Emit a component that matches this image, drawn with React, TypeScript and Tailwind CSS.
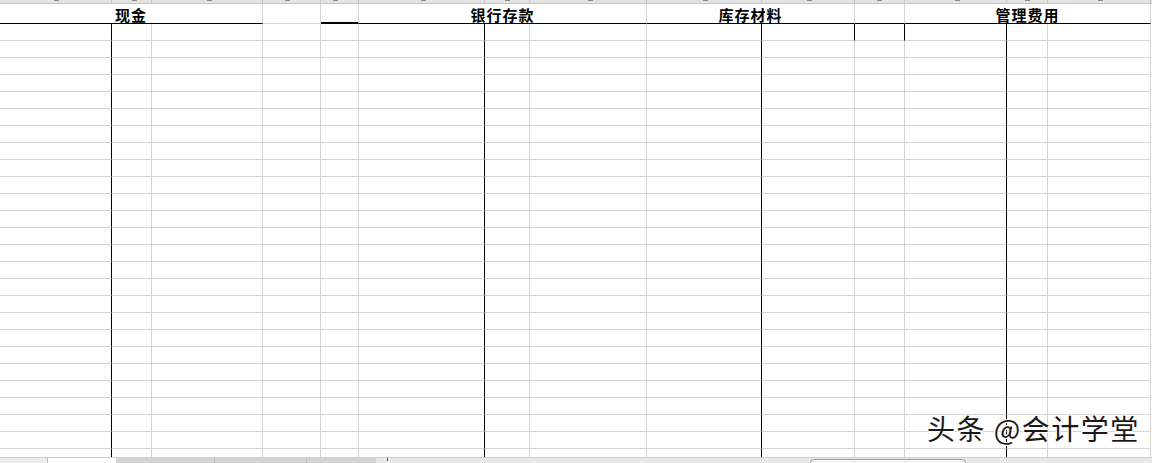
const widths = [112, 40, 111, 58, 38, 126, 45, 117, 115, 93, 50, 102, 41, 103];
const blackCols = [0, 5, 8, 11];
const marks = [54, 20, 55, 22, 12, 62, 20, 58, 56, 45, 22, 50, 18, 50];

function TopStrip() {
  return (
    <div className="flex h-[4px] bg-[#e4e4e4] border-b border-[#c6c6c6]">
      {widths.map((w, i) => (
        <div
          key={i}
          className="relative shrink-0 border-r border-[#c9c9c9]"
          style={{ width: w }}
        >
          <div
            className="absolute top-0 h-[1px] w-[5px] bg-[#8a8a8a]"
            style={{ left: marks[i] }}
          />
        </div>
      ))}
    </div>
  );
}

function HeaderRow() {
  const cell = "shrink-0 flex items-center justify-center h-[20px] pt-[1px] border-r border-[#d4d4d4]";
  return (
    <div className="flex font-['Noto_Sans_CJK_SC',sans-serif] text-[15px] font-bold tracking-[1px] text-black leading-none">
      <div className={`${cell} w-[263px] border-b border-b-black`}>现金</div>
      <div className={`${cell} w-[58px] border-b border-b-[#d4d4d4]`} />
      <div className={`${cell} w-[38px] border-b-2 border-b-black`} />
      <div className={`${cell} w-[288px] border-b border-b-black`}>银行存款</div>
      <div className={`${cell} w-[208px] border-b border-b-black`}>库存材料</div>
      <div className={`${cell} w-[50px] border-b border-b-black`} />
      <div className={`${cell} w-[246px] border-b border-b-black`}>管理费用</div>
    </div>
  );
}

function DataRow({ first }: { first: boolean }) {
  return (
    <div className="flex h-[17px]">
      {widths.map((w, i) => {
        const black = blackCols.includes(i) || (first && (i === 9 || i === 10));
        return (
          <div
            key={i}
            className={
              black
                ? "shrink-0 border-r border-r-black border-b border-b-[#d4d4d4]"
                : "shrink-0 border-r border-r-[#d4d4d4] border-b border-b-[#d4d4d4]"
            }
            style={{ width: w }}
          />
        );
      })}
    </div>
  );
}

function TabBar() {
  return (
    <div className="relative flex h-[6px] bg-[#e8e8e8] border-t border-[#cfcfcf]">
      <div className="w-[48px] bg-[#ececec] border-r border-[#bdbdbd]" />
      <div className="w-[68px] bg-white" />
      <div className="w-[99px] bg-[#d3d3d3] border-r border-[#bcbcbc]" />
      <div className="w-[92px] bg-[#d3d3d3] border-r border-[#bcbcbc]" />
      <div className="w-[69px] bg-[#d3d3d3]" />
      <div className="ml-[11px] w-[1px] h-[3px] bg-[#555]" />
      <div className="absolute left-[810px] top-[1px] w-[156px] h-[10px] rounded-[4px] border border-[#9d9d9d] bg-[#f4f4f4]" />
    </div>
  );
}

export default function App() {
  return (
    <div className="relative w-[1152px] h-[463px] overflow-hidden bg-white">
      <TopStrip />
      <HeaderRow />
      <div className="h-[433px] overflow-hidden">
        {Array.from({ length: 26 }).map((_, r) => (
          <DataRow key={r} first={r === 0} />
        ))}
      </div>
      <TabBar />
      <div
        className="absolute left-[927px] top-[414px] font-['Noto_Sans_CJK_SC',sans-serif] text-[28px] leading-none text-[#1a1a1a] tracking-[1.5px]"
        style={{ textShadow: "1px 1px 0 #fff, -1px -1px 0 #fff, 1px -1px 0 #fff, -1px 1px 0 #fff" }}
      >
        头条 @会计学堂
      </div>
    </div>
  );
}
